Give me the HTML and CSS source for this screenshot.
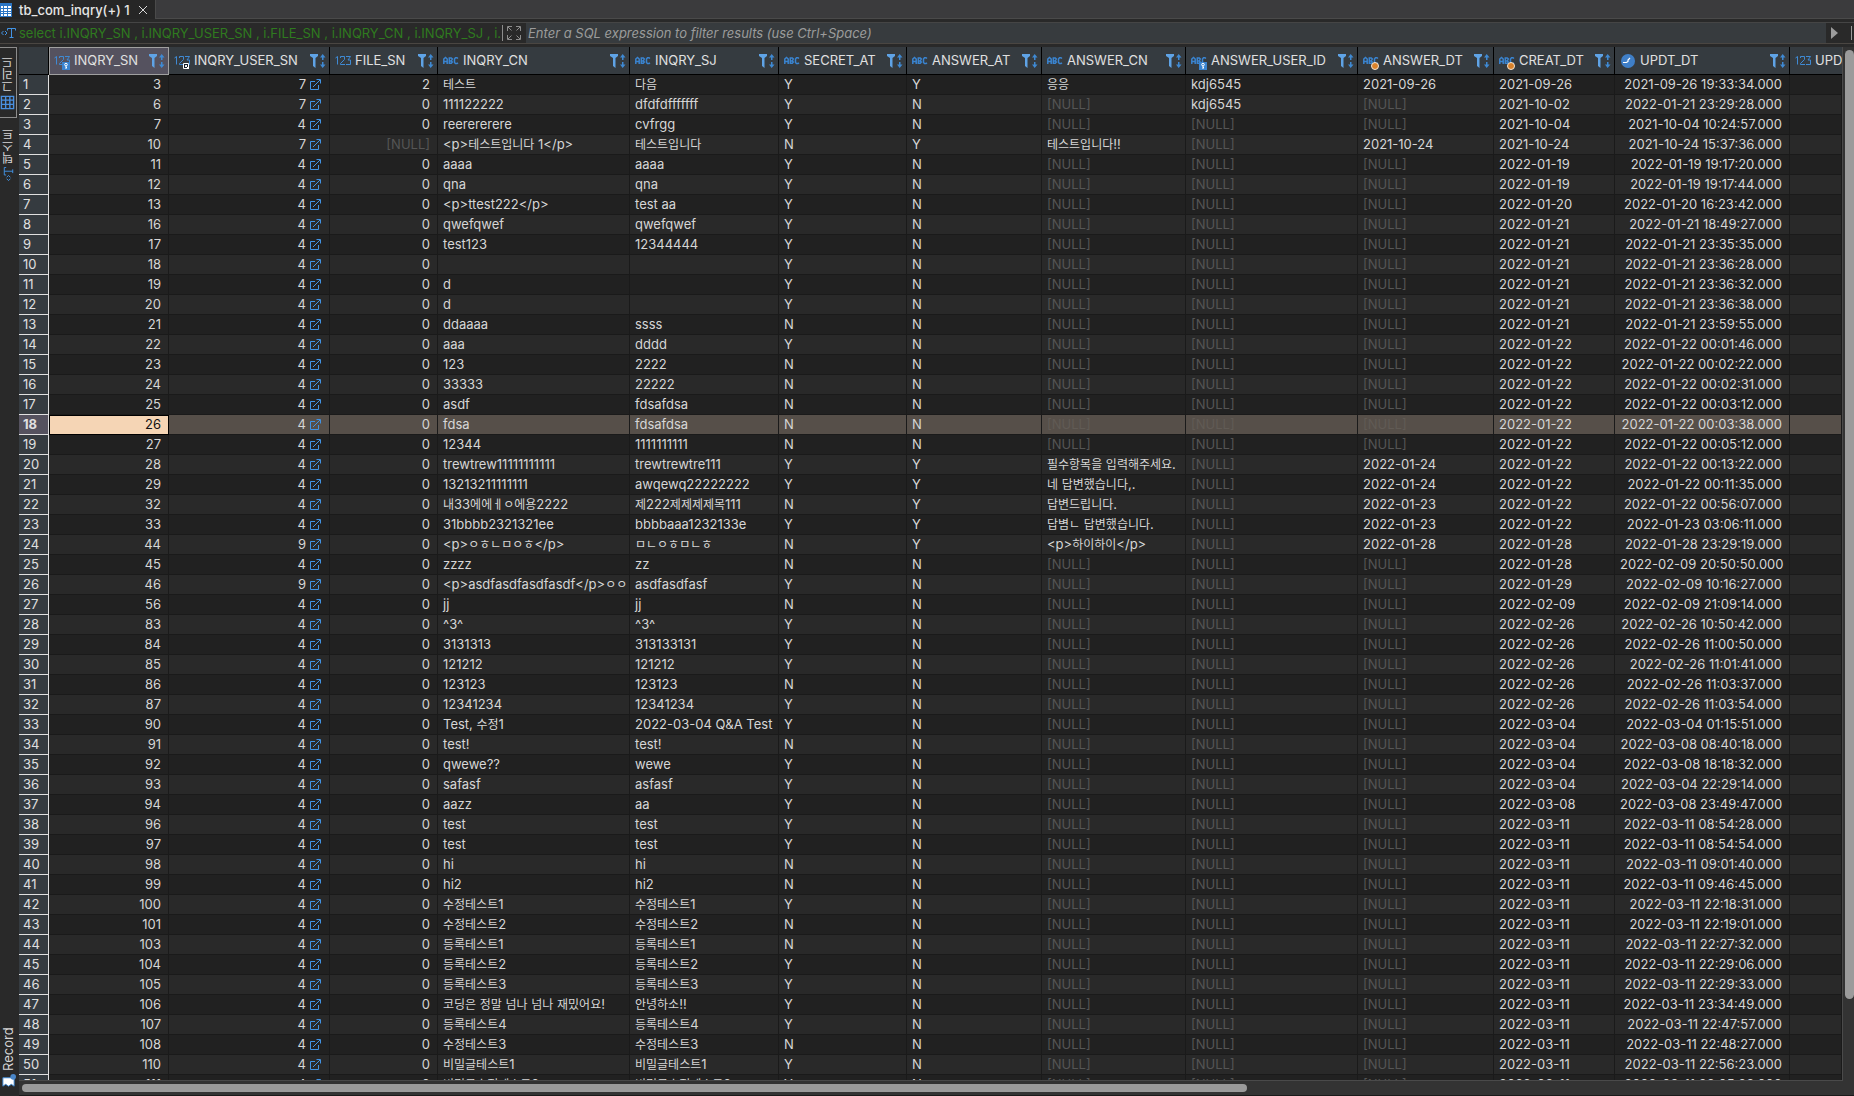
FILE: index.html
```
<!DOCTYPE html>
<html lang="ko">
<head>
    <meta charset="UTF-8">
    <meta name="viewport" content="width=device-width, initial-scale=1.0">
    <title>tb_com_inqry(+) 1</title>
    <link rel="stylesheet" href="styles.css">
</head>
<body>
    <svg class="defs" width="0" height="0" aria-hidden="true">
        <symbol id="i-num" viewBox="0 0 16 16">
            <path d="M.5 5l2-1.500v8M5.500 5V3.500h4v3l-4 4v1h4.500M11 3.500h4.500l-2.500 3.500h2.500v4.500H11" fill="none" stroke="#3f8ad4" />
        </symbol>
        <symbol id="i-abc" viewBox="0 0 16 16">
            <path d="M.8 11V6L2.500 4.500 4.200 6v5M1 8.500h3M6.300 5h2l1 1-1 2 1 1-1 1.200h-2zM6.300 8h2M15 5.500l-1-.7h-1.500L11.500 6v3.500l1 1H14l1-.7" fill="none" stroke="#3a84d0" stroke-width="1.500" />
        </symbol>
        <symbol id="i-key" viewBox="0 0 8 8">
            <path d="M0 0h8v8H0z" fill="#3a84d0" />
            <path d="M4 1.300a1.300 1.300 0 1 1 0 2.600 1.300 1.300 0 0 1 0-2.600zM4 4v3M4 5.500h1" fill="none" stroke="#fff" />
        </symbol>
        <symbol id="i-ref" viewBox="0 0 8 8">
            <path d="M1.500 1.500h5v5h-5z" fill="#16202c" stroke="#fff" />
            <path d="M3.500 5V3.500H5M3.500 3.500L7 7" fill="none" stroke="#fff" />
        </symbol>
        <symbol id="i-dot" viewBox="0 0 8 8">
            <circle cx="4" cy="4" r="3.500" fill="#d9822b" stroke="#f4e6d4" />
        </symbol>
        <symbol id="i-clock" viewBox="0 0 16 16">
            <circle cx="8" cy="8" r="7" fill="#3f7fc8" />
            <path d="M3 9.500h3.500L8 8.500V7l2-2" fill="none" stroke="#fff" stroke-width="1.200" />
        </symbol>
        <symbol id="i-sort" viewBox="0 0 16 16">
            <path d="M0 1h8v2L5.500 5v10L3 13V5L0 3z" fill="#5fa3e6" />
            <path d="M10 4.500L12.700 1l2.800 3.500zM10 11.500h5.500L12.700 15zM12 4h1.500v3H12zM12 9h1.500v3H12z" fill="#3f8ad4" />
        </symbol>
        <symbol id="i-link" viewBox="0 0 11 11">
            <path d="M5 2.500H.5v8h8V6M3 8l7-7M6.500.5h4v4" fill="none" stroke="#4293e4" />
        </symbol>
        <symbol id="i-grid" viewBox="0 0 16 16">
            <path d="M1.500 1.500h13v13h-13zM1.500 6h13M1.500 10.500h13M6 1.500v13M10.500 1.500v13" fill="none" stroke="#4a90e0" stroke-width="1.500" />
        </symbol>
        <symbol id="i-sql" viewBox="0 0 16 16">
            <path d="M3.500 6l-2 2 2 2M5 6l2 2-2 2M7.500 5.500v-2h8v2M11.500 3.500v9M9.500 12.500h4" fill="none" stroke="#4293e4" />
        </symbol>
    </svg>

    <nav class="tabs">
        <button class="tab" type="button">
            <svg class="tab-icon" viewBox="0 0 12 14"><path d="M0 0h12v14H0z" fill="#2c76c4" /><path d="M1 3h2v2H1zM4 3h3v2H4zM8 3h3v2H8zM1 6h2v2H1zM4 6h3v2H4zM8 6h3v2H8zM1 9h2v1H1zM4 9h3v1H4zM8 9h3v1H8zM1 11h2v2H1zM4 11h3v2H4zM8 11h3v2H8z" fill="#fff" /></svg>
            <span>tb_com_inqry(+) 1</span>
            <svg class="tab-close" viewBox="0 0 10 10"><path d="M1 1l8 8M9 1L1 9" stroke="#d8d8d8" /></svg>
        </button>
    </nav>

    <form class="filter">
        <svg class="icon"><use href="#i-sql" /></svg>
        <span class="query">select i.INQRY_SN , i.INQRY_USER_SN , i.FILE_SN , i.INQRY_CN , i.INQRY_SJ , i.</span>
        <svg class="expand" viewBox="0 0 16 16"><path d="M1.500 6V1.500H6M2 2l3.500 3.500M10 1.500h4.500V6M14 2l-3.500 3.500M1.500 10v4.500H6M2 14l3.500-3.500M10 14.500h4.500V10M14 14l-3.500-3.500" fill="none" stroke="#8c8c8c" /></svg>
        <input class="expression" type="text" aria-label="SQL filter" placeholder="Enter a SQL expression to filter results (use Ctrl+Space)">
        <button class="run" type="button" aria-label="Apply filter"></button>
    </form>

    <main class="results">
        <div class="modes">
            <button class="mode active" type="button"><svg class="icon"><use href="#i-grid" /></svg><span class="ko">그리드</span></button>
            <button class="mode" type="button"><svg class="icon"><use href="#i-sql" /></svg><span class="ko">텍스트</span></button>
            <button class="mode record" type="button"><svg class="icon" viewBox="0 0 16 16"><path d="M3 2h9v12H3l2-3-2-3 2-3z" fill="#fff" stroke="#3a84d0" /><circle cx="13" cy="13" r="3" fill="#4a86c8" /></svg><span>Record</span></button>
        </div>
        <div class="pane">
            <div class="view">
                <div class="grid">
                    <table>
                        <colgroup>
                            <col class="c-row"><col class="c-sn"><col class="c-user"><col class="c-file"><col class="c-cn"><col class="c-sj"><col class="c-secret"><col class="c-at"><col class="c-answer"><col class="c-uid"><col class="c-adt"><col class="c-cdt"><col class="c-udt"><col>
                        </colgroup>
                        <thead><tr id="head"></tr></thead>
                        <tbody id="rows"></tbody>
                    </table>
                </div>
                <div class="scroll-y"><div class="thumb"></div></div>
            </div>
            <div class="scroll-x"><div class="thumb"></div></div>
        </div>
    </main>

    <script src="script.js"></script>
</body>
</html>
```
FILE: styles.css
```
* {
    box-sizing: border-box;
}

body {
    margin: 0;
    height: 100vh;
    display: flex;
    flex-direction: column;
    overflow: hidden;
    background: #292929;
    color: #d6d6d6;
    font: 13px/20px Inter, "Noto Sans CJK KR", sans-serif;
}

button, input {
    margin: 0;
    padding: 0;
    border: 0;
    background: none;
    color: inherit;
    font: inherit;
}

.defs {
    position: absolute;
}

.icon {
    width: 16px;
    height: 16px;
    flex: none;
}

.ko {
    font-size: 12px;
}

/* tab strip */
.tabs {
    flex: none;
    height: 19px;
    background: #3b3b3d;
    border-bottom: 1px solid #4a4a4a;
}

.tab {
    display: flex;
    align-items: center;
    height: 19px;
    width: 156px;
    background: #262626;
    border-right: 1px solid #4a4a4a;
    color: #e6e6e6;
    font-weight: 500;
    line-height: 16px;
    white-space: nowrap;
}

.tab-icon {
    width: 12px;
    height: 14px;
    margin-right: 7px;
}

.tab-close {
    width: 10px;
    height: 10px;
    margin-left: 8px;
}

/* filter bar */
.filter {
    flex: none;
    display: flex;
    align-items: center;
    height: 22px;
    margin-top: 3px;
    border-top: 1px solid #454545;
    border-bottom: 1px solid #4a4642;
}

.query {
    width: 484px;
    margin-left: 3px;
    overflow: hidden;
    white-space: nowrap;
    color: #2f7a1f;
    border-right: 1px solid #8c8c8c;
    line-height: 16px;
}

.expand {
    width: 16px;
    height: 16px;
    margin: 0 4px 0 3px;
}

.expression {
    flex: 1;
    height: 20px;
    padding-left: 2px;
    background: #373b3e;
    font-style: italic;
}

.expression::placeholder {
    color: #9b9b9b;
}

.run {
    width: 26px;
    height: 14px;
    border-right: 1px solid #9b9b9b;
    margin-right: 2px;
}

.run::before {
    content: "";
    display: block;
    width: 7px;
    height: 12px;
    margin-left: 5px;
    background: #9b9b9b;
    clip-path: polygon(0 0, 100% 50%, 0 100%);
}

/* results pane */
.results {
    flex: 1;
    min-height: 0;
    display: flex;
    margin-top: 3px;
}

.modes {
    flex: none;
    width: 19px;
    display: flex;
    flex-direction: column;
    align-items: flex-start;
}

.mode {
    display: flex;
    align-items: center;
    justify-content: flex-start;
    gap: 3px;
    width: 17px;
    height: 71px;
    padding: 7px 0;
    writing-mode: vertical-rl;
    transform: rotate(180deg);
    line-height: 15px;
    white-space: nowrap;
}

.mode .icon {
    width: 15px;
    height: 15px;
    transform: rotate(90deg);
}

.mode.active {
    border: 1px solid #8c8c8c;
    border-right: 0;
}

.mode.record {
    margin-top: auto;
}

.pane {
    flex: 1;
    min-width: 0;
    display: flex;
    flex-direction: column;
}

.view {
    flex: 1;
    min-height: 0;
    display: flex;
}

.grid {
    flex: 1;
    min-width: 0;
    overflow: hidden;
    border-right: 1px solid #4a4a4a;
    border-bottom: 1px solid #4a4a4a;
}

table {
    width: 100%;
    table-layout: fixed;
    border-collapse: separate;
    border-spacing: 0;
}

.c-row { width: 30px; }
.c-sn { width: 120px; }
.c-user { width: 161px; }
.c-file { width: 108px; }
.c-cn { width: 192px; }
.c-sj { width: 149px; }
.c-secret { width: 128px; }
.c-at { width: 135px; }
.c-answer { width: 144px; }
.c-uid { width: 172px; }
.c-adt { width: 136px; }
.c-cdt { width: 121px; }
.c-udt { width: 175px; }

th, td {
    height: 20px;
    padding: 0 5px;
    overflow: hidden;
    white-space: nowrap;
    font-weight: 400;
    text-align: left;
    border-right: 1px solid #1a1a1a;
    border-bottom: 1px solid #1a1a1a;
    line-height: 19px;
}

thead th {
    height: 28px;
    padding-right: 3px;
    background: #353b40;
    border-color: #000;
    color: #e0e0e0;
}

thead th.current {
    background: #55525f;
    border-color: #a0a0a0;
    box-shadow: inset 1px 1px #a0a0a0;
}

.head {
    display: flex;
    align-items: center;
}

.type {
    display: flex;
    position: relative;
    flex: none;
    margin-right: 4px;
}

.badge {
    position: absolute;
    right: 0;
    bottom: -1px;
    width: 8px;
    height: 8px;
}

.sort {
    flex: none;
    margin-left: auto;
}

thead th:last-child {
    padding-right: 0;
    border-right: 0;
}

thead th:last-child .sort {
    display: none;
}

tbody tr:nth-child(odd) {
    background: #212121;
}

tbody tr:nth-child(even) {
    background: #292929;
}

tbody th {
    padding: 0 4px;
    background: #353b40;
    border-right-color: #e0e0e0;
    border-bottom-color: #e0e0e0;
    color: #e0e0e0;
}

tbody .num {
    padding-right: 7px;
    text-align: right;
}

.link {
    display: inline-block;
    width: 11px;
    height: 11px;
    margin: 0 1px 0 4px;
    vertical-align: -1px;
}

.null {
    color: #555;
}

tbody tr.selected {
    background: #564f49;
}

.selected th {
    background: #55525f;
    font-weight: 700;
}

.selected .null {
    color: #615b55;
}

.selected td.focus {
    background: #f5d5b5;
    border-color: #000;
    box-shadow: inset 1px 1px #000;
    color: #111;
}

/* scrollbars */
.scroll-y {
    flex: none;
    width: 11px;
    padding: 3px 0 0 2px;
    background: #333;
}

.scroll-y .thumb {
    height: 92%;
    background: #9b9b9b;
    border-radius: 5px;
}

.scroll-x {
    flex: none;
    height: 15px;
    padding: 3px 3px;
    background: #333;
    border-bottom: 1px solid #1a1a1a;
}

.scroll-x .thumb {
    width: 67%;
    height: 8px;
    background: #9b9b9b;
    border-radius: 4px;
}
```
FILE: script.js
```
const columns = [
    ['INQRY_SN', 'num', 'key'],
    ['INQRY_USER_SN', 'num', 'ref'],
    ['FILE_SN', 'num'],
    ['INQRY_CN', 'abc'],
    ['INQRY_SJ', 'abc'],
    ['SECRET_AT', 'abc'],
    ['ANSWER_AT', 'abc'],
    ['ANSWER_CN', 'abc'],
    ['ANSWER_USER_ID', 'abc', 'key'],
    ['ANSWER_DT', 'abc', 'dot'],
    ['CREAT_DT', 'abc', 'dot'],
    ['UPDT_DT', 'clock'],
    ['UPD', 'num']
];

// sn | user | file | cn | sj | secret + answered | answer | answer user | answer date | created | updated
// "-" is NULL
const data = `3|7|2|테스트|다음|YY|응응|kdj6545|2021-09-26|2021-09-26|2021-09-26 19:33:34
6|7|0|111122222|dfdfdfffffff|YN|-|kdj6545|-|2021-10-02|2022-01-21 23:29:28
7|4|0|reerererere|cvfrgg|YN|-|-|-|2021-10-04|2021-10-04 10:24:57
10|7|-|<p>테스트입니다 1</p>|테스트입니다|NY|테스트입니다!!|-|2021-10-24|2021-10-24|2021-10-24 15:37:36
11|4|0|aaaa|aaaa|YN|-|-|-|2022-01-19|2022-01-19 19:17:20
12|4|0|qna|qna|YN|-|-|-|2022-01-19|2022-01-19 19:17:44
13|4|0|<p>ttest222</p>|test aa|YN|-|-|-|2022-01-20|2022-01-20 16:23:42
16|4|0|qwefqwef|qwefqwef|YN|-|-|-|2022-01-21|2022-01-21 18:49:27
17|4|0|test123|12344444|YN|-|-|-|2022-01-21|2022-01-21 23:35:35
18|4|0|||YN|-|-|-|2022-01-21|2022-01-21 23:36:28
19|4|0|d||YN|-|-|-|2022-01-21|2022-01-21 23:36:32
20|4|0|d||YN|-|-|-|2022-01-21|2022-01-21 23:36:38
21|4|0|ddaaaa|ssss|NN|-|-|-|2022-01-21|2022-01-21 23:59:55
22|4|0|aaa|dddd|YN|-|-|-|2022-01-22|2022-01-22 00:01:46
23|4|0|123|2222|NN|-|-|-|2022-01-22|2022-01-22 00:02:22
24|4|0|33333|22222|NN|-|-|-|2022-01-22|2022-01-22 00:02:31
25|4|0|asdf|fdsafdsa|NN|-|-|-|2022-01-22|2022-01-22 00:03:12
26|4|0|fdsa|fdsafdsa|NN|-|-|-|2022-01-22|2022-01-22 00:03:38
27|4|0|12344|1111111111|NN|-|-|-|2022-01-22|2022-01-22 00:05:12
28|4|0|trewtrew11111111111|trewtrewtre111|YY|필수항목을 입력해주세요.|-|2022-01-24|2022-01-22|2022-01-22 00:13:22
29|4|0|13213211111111|awqewq22222222|YY|네 답변했습니다,.|-|2022-01-24|2022-01-22|2022-01-22 00:11:35
32|4|0|내33에에ㅔㅇ에용2222|제222제제제제목111|NY|답변드립니다.|-|2022-01-23|2022-01-22|2022-01-22 00:56:07
33|4|0|31bbbb2321321ee|bbbbaaa1232133e|YY|답볌ㄴ 답변했습니다.|-|2022-01-23|2022-01-22|2022-01-23 03:06:11
44|9|0|<p>ㅇㅎㄴㅁㅇㅎ</p>|ㅁㄴㅇㅎㅁㄴㅎ|NY|<p>하이하이</p>|-|2022-01-28|2022-01-28|2022-01-28 23:29:19
45|4|0|zzzz|zz|NN|-|-|-|2022-01-28|2022-02-09 20:50:50
46|9|0|<p>asdfasdfasdfasdf</p>ㅇㅇ|asdfasdfasf|YN|-|-|-|2022-01-29|2022-02-09 10:16:27
56|4|0|jj|jj|NN|-|-|-|2022-02-09|2022-02-09 21:09:14
83|4|0|^3^|^3^|YN|-|-|-|2022-02-26|2022-02-26 10:50:42
84|4|0|3131313|313133131|YN|-|-|-|2022-02-26|2022-02-26 11:00:50
85|4|0|121212|121212|YN|-|-|-|2022-02-26|2022-02-26 11:01:41
86|4|0|123123|123123|NN|-|-|-|2022-02-26|2022-02-26 11:03:37
87|4|0|12341234|12341234|YN|-|-|-|2022-02-26|2022-02-26 11:03:54
90|4|0|Test, 수정1|2022-03-04 Q&A Test|YN|-|-|-|2022-03-04|2022-03-04 01:15:51
91|4|0|test!|test!|NN|-|-|-|2022-03-04|2022-03-08 08:40:18
92|4|0|qwewe??|wewe|YN|-|-|-|2022-03-04|2022-03-08 18:18:32
93|4|0|safasf|asfasf|YN|-|-|-|2022-03-04|2022-03-04 22:29:14
94|4|0|aazz|aa|YN|-|-|-|2022-03-08|2022-03-08 23:49:47
96|4|0|test|test|YN|-|-|-|2022-03-11|2022-03-11 08:54:28
97|4|0|test|test|YN|-|-|-|2022-03-11|2022-03-11 08:54:54
98|4|0|hi|hi|NN|-|-|-|2022-03-11|2022-03-11 09:01:40
99|4|0|hi2|hi2|NN|-|-|-|2022-03-11|2022-03-11 09:46:45
100|4|0|수정테스트1|수정테스트1|YN|-|-|-|2022-03-11|2022-03-11 22:18:31
101|4|0|수정테스트2|수정테스트2|NN|-|-|-|2022-03-11|2022-03-11 22:19:01
103|4|0|등록테스트1|등록테스트1|NN|-|-|-|2022-03-11|2022-03-11 22:27:32
104|4|0|등록테스트2|등록테스트2|YN|-|-|-|2022-03-11|2022-03-11 22:29:06
105|4|0|등록테스트3|등록테스트3|YN|-|-|-|2022-03-11|2022-03-11 22:29:33
106|4|0|코딩은 정말 넘나 넘나 재밌어요!|안녕하소!!|YN|-|-|-|2022-03-11|2022-03-11 23:34:49
107|4|0|등록테스트4|등록테스트4|YN|-|-|-|2022-03-11|2022-03-11 22:47:57
108|4|0|수정테스트3|수정테스트3|NN|-|-|-|2022-03-11|2022-03-11 22:48:27
110|4|0|비밀글테스트1|비밀글테스트1|YN|-|-|-|2022-03-11|2022-03-11 22:56:23
111|4|0|비밀글수정테스트2|비밀글수정테스트2|YN|-|-|-|2022-03-11|2022-03-11 23:05:23`;

function icon(name, cls) {
    return `<svg class="${cls}"><use href="#i-${name}" /></svg>`;
}

// Hangul runs get their own, slightly smaller size
function addText(td, value) {
    value.split(/([ㄱ-ㅣ가-힣]+)/).forEach((part, i) => {
        if (i % 2 === 0) {
            td.append(part);
            return;
        }
        const span = document.createElement('span');
        span.className = 'ko';
        span.textContent = part;
        td.append(span);
    });
}

document.getElementById('head').innerHTML = '<th></th>' + columns.map(([name, type, badge], i) =>
    `<th class="${i === 0 ? 'current' : ''}"><div class="head"><span class="type">${icon(type, 'icon')}${badge ? icon(badge, 'badge') : ''}</span>${name}${icon('sort', 'icon sort')}</div></th>`
).join('');

const tbody = document.getElementById('rows');

data.split('\n').forEach((line, n) => {
    const f = line.split('|');
    const values = [...f.slice(0, 5), f[5][0], f[5][1], ...f.slice(6, 10), f[10] + '.000', ''];
    const tr = tbody.insertRow();
    const th = document.createElement('th');
    th.textContent = n + 1;
    tr.append(th);
    values.forEach((value, i) => {
        const td = tr.insertCell();
        addText(td, value === '-' ? '[NULL]' : value);
        if (value === '-') td.classList.add('null');
        if (i < 3 || i === 11) td.classList.add('num');
        if (i === 1) td.insertAdjacentHTML('beforeend', icon('link', 'link'));
    });
    if (f[0] === '26') {
        tr.className = 'selected';
        tr.cells[1].classList.add('focus');
    }
});
```
